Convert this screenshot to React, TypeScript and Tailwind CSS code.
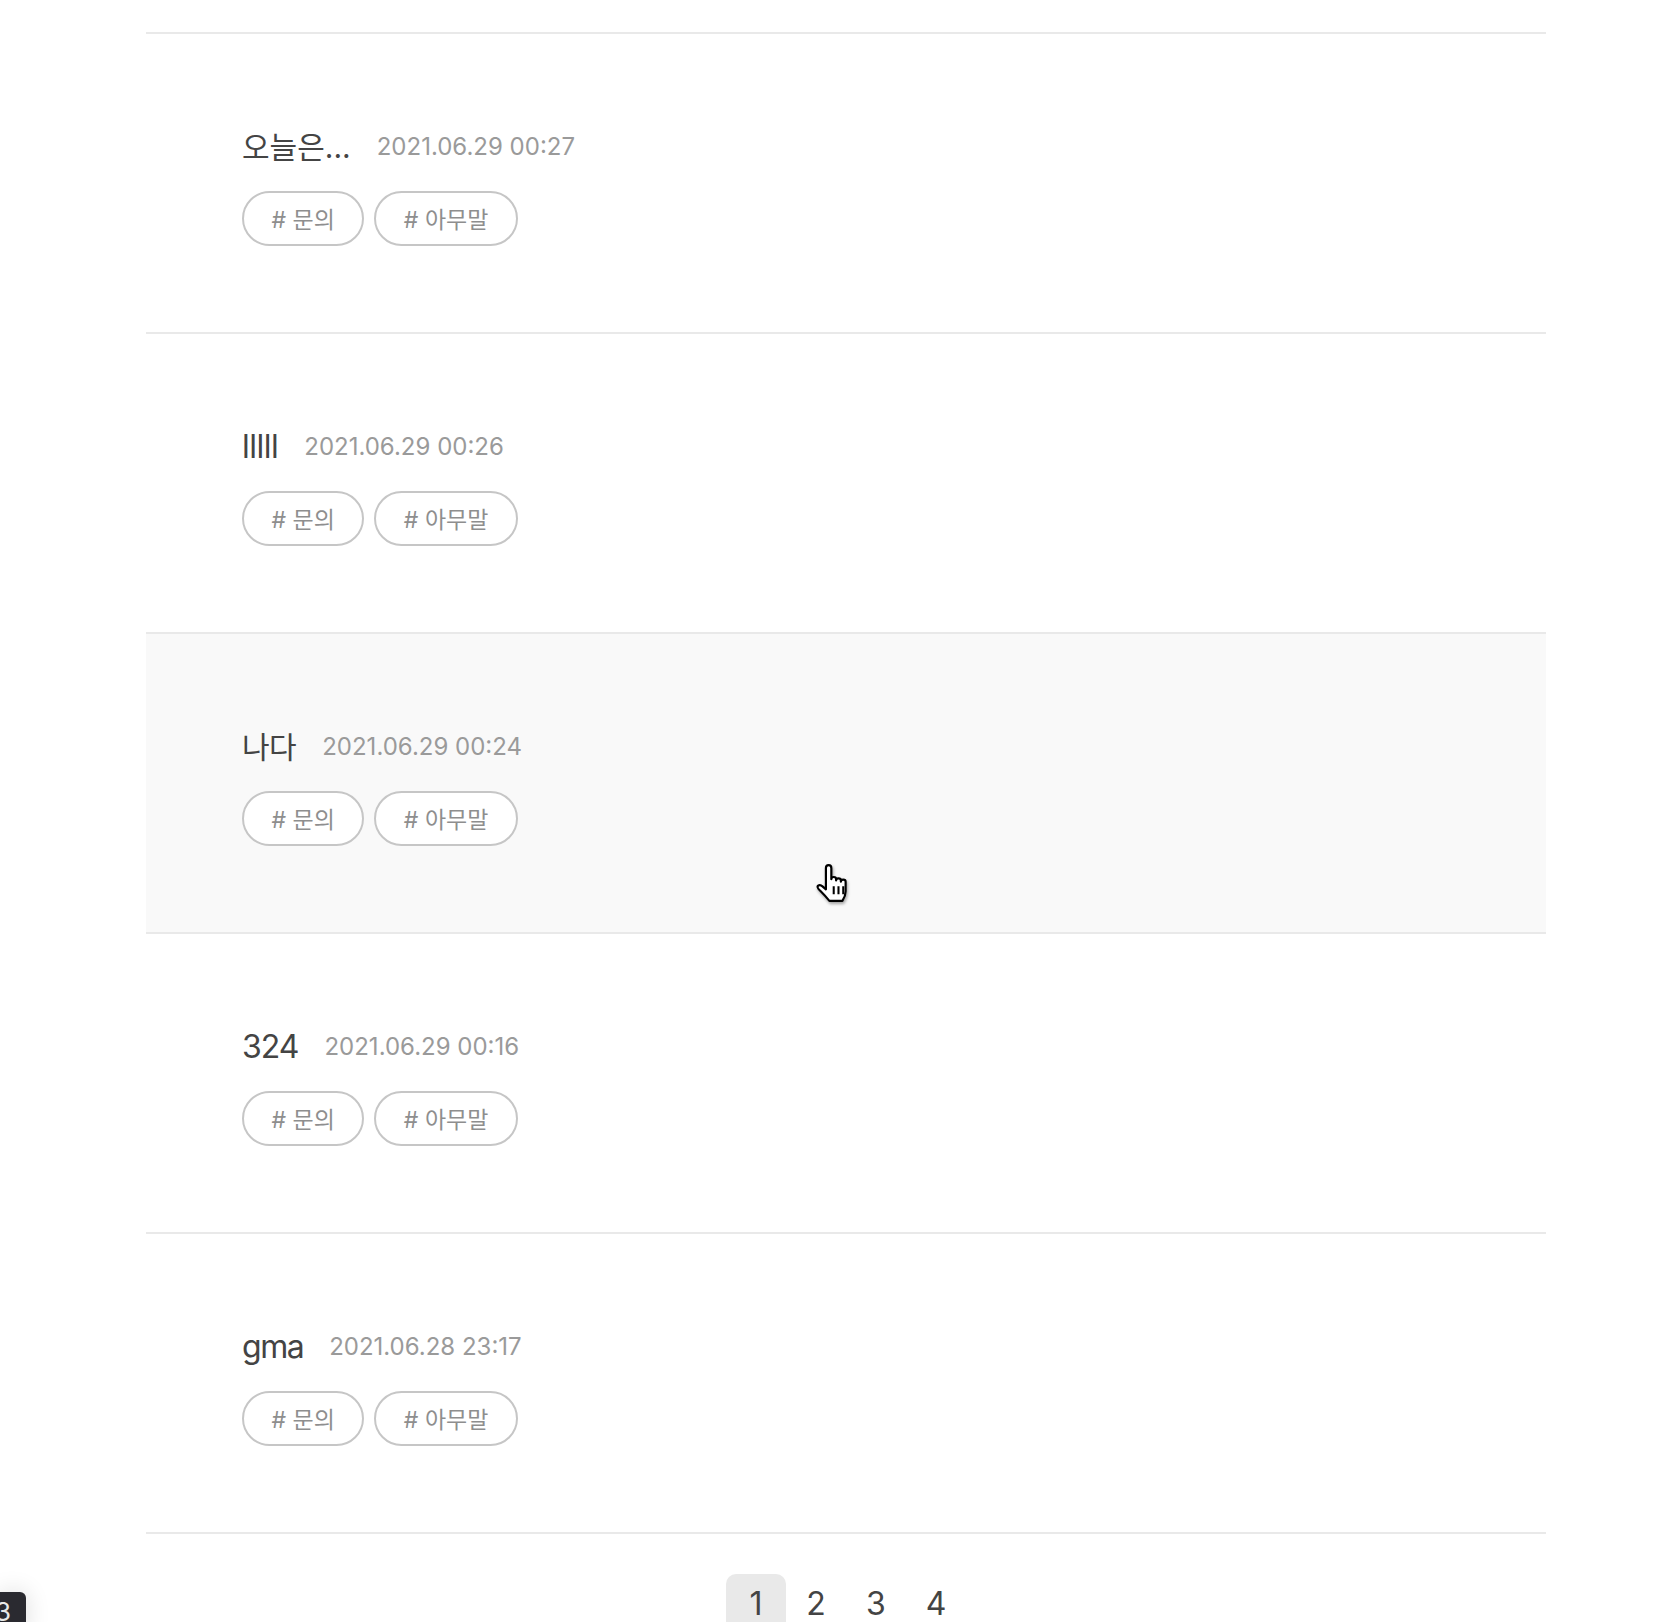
import React from "react";

type Post = { title: string; date: string; size: string; track: string; hover?: boolean };

const posts: Post[] = [
  { title: "오늘은...", date: "2021.06.29 00:27", size: "text-[30px]", track: "tracking-normal" },
  { title: "lllll", date: "2021.06.29 00:26", size: "text-[32px]", track: "tracking-[-0.5px]" },
  { title: "나다", date: "2021.06.29 00:24", size: "text-[30px]", track: "tracking-[-0.5px]", hover: true },
  { title: "324", date: "2021.06.29 00:16", size: "text-[32px]", track: "tracking-[-1px]" },
  { title: "gma", date: "2021.06.28 23:17", size: "text-[32px]", track: "tracking-[-1.5px]" },
];

const tags = ["# 문의", "# 아무말"];

function HandCursor() {
  return (
    <svg
      className="absolute left-[815px] top-[864px] w-[37px] h-[39px] drop-shadow-[1px_2px_1.5px_rgba(0,0,0,0.35)]"
      viewBox="0 0 17 18"
    >
      <path
        d="M5 10.2V1.8C5 1 5.6 0.5 6.25 0.5C6.9 0.5 7.5 1 7.5 1.8V7C7.5 6.3 8 6 8.6 6C9.2 6 9.7 6.4 9.7 7V7.6C9.7 7 10.2 6.6 10.8 6.6C11.4 6.6 11.9 7 11.9 7.6V8.2C11.9 7.6 12.4 7.2 13 7.2C13.6 7.2 14.1 7.6 14.1 8.2V12.6C14.1 14.4 13.4 15.8 12.6 17H6.6C5.6 15.8 4.2 14.2 2.6 12.6C1.6 11.6 0.8 10.9 1.2 10.2C1.6 9.5 2.6 9.6 3.4 10.3L5 11.7Z"
        fill="#ffffff"
        stroke="#000000"
        strokeWidth="1"
        strokeLinejoin="round"
      />
      <path d="M8.6 10.3V14M10.8 10.3V14M13 10.3V14" stroke="#000000" strokeWidth="0.95" />
    </svg>
  );
}

export default function App() {
  return (
    <div className="relative h-[1622px] overflow-hidden bg-white font-['Inter','Noto_Sans_CJK_KR',sans-serif]">
      <div className="ml-[146px] w-[1400px]">
        <div className="h-[34px] border-b-2 border-[#e9e9e9]" />
        {posts.map((p) => (
          <div
            key={p.date}
            className={`h-[300px] border-b-2 border-[#e9e9e9] pl-[96px] pt-[93px] ${
              p.hover ? "bg-[#f9f9f9]" : "bg-white"
            }`}
          >
            <div className="flex h-[40px] items-center">
              <span className={`leading-[40px] text-[#444444] ${p.size} ${p.track}`}>
                {p.title}
              </span>
              <span className="ml-[26px] text-[24px] leading-[40px] text-[#9a9a9a]">
                {p.date}
              </span>
            </div>
            <div className="mt-[24px] flex gap-[10px]">
              {tags.map((t) => (
                <span
                  key={t}
                  className="flex h-[55px] items-center rounded-full border-2 border-[#c6c6c6] bg-white px-[27.5px] pt-[3px] text-[23px] text-[#8e8e8e]"
                >
                  {t}
                </span>
              ))}
            </div>
          </div>
        ))}
        <div className="flex justify-center pt-[40px]">
          {["1", "2", "3", "4"].map((n) => (
            <span
              key={n}
              className={`flex h-[60px] w-[60px] items-center justify-center rounded-[10px] text-[32px] text-[#444444] ${
                n === "1" ? "bg-[#e9e9e9]" : ""
              }`}
            >
              {n}
            </span>
          ))}
        </div>
      </div>

      <HandCursor />

      <div className="absolute left-0 top-[1592px] h-[40px] w-[26px] overflow-hidden rounded-tr-[6px] bg-[#2a2a30] shadow-[0_0_24px_rgba(0,0,0,0.14)]">
        <span className="ml-[-5px] mt-[7px] block text-[26px] leading-none text-[#e8e8e8]">3</span>
      </div>
    </div>
  );
}
